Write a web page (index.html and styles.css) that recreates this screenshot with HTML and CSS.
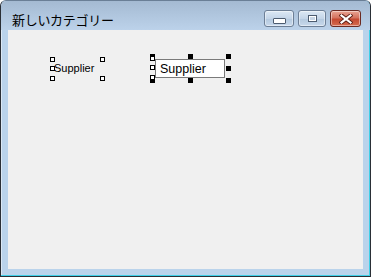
FILE: index.html
```html
<!DOCTYPE html>
<html lang="ja">
<head>
  <meta charset="UTF-8">
  <title>新しいカテゴリー</title>
  <link rel="stylesheet" href="styles.css">
</head>
<body>
  <div class="window">
    <!-- Title bar -->
    <div class="titlebar">
      <span class="title">新しいカテゴリー</span>
      <div class="controls">
        <div class="ctl min"><span class="glyph-min"></span></div>
        <div class="ctl max"><span class="glyph-max"></span></div>
        <div class="ctl close">
          <svg width="14" height="10" viewBox="0 0 14 10">
            <path d="M2.5 1.5 L11.5 8.5 M11.5 1.5 L2.5 8.5" stroke="#5a1d14" stroke-width="4" stroke-linecap="square"/>
            <path d="M2.5 1.5 L11.5 8.5 M11.5 1.5 L2.5 8.5" stroke="#fff" stroke-width="2.2" stroke-linecap="square"/>
          </svg>
        </div>
      </div>
    </div>

    <!-- Designer surface -->
    <div class="client">
      <div class="label-ctl">Supplier</div>
      <span class="grip hollow" style="left:42px;top:27px"></span>
      <span class="grip hollow" style="left:92px;top:27px"></span>
      <span class="grip hollow" style="left:42px;top:36px"></span>
      <span class="grip hollow" style="left:42px;top:46px"></span>
      <span class="grip hollow" style="left:92px;top:46px"></span>

      <div class="textbox">Supplier</div>
      <span class="grip solid" style="left:142px;top:24px"></span>
      <span class="grip solid" style="left:180px;top:24px"></span>
      <span class="grip solid" style="left:218px;top:24px"></span>
      <span class="grip solid" style="left:218px;top:36px"></span>
      <span class="grip solid" style="left:142px;top:48px"></span>
      <span class="grip solid" style="left:180px;top:48px"></span>
      <span class="grip solid" style="left:218px;top:48px"></span>
      <span class="grip hollow" style="left:142px;top:26px"></span>
      <span class="grip hollow" style="left:142px;top:35px"></span>
      <span class="grip hollow" style="left:142px;top:45px"></span>
    </div>
  </div>
</body>
</html>
```

FILE: styles.css
```css
body {
  margin: 0;
  background: #ffffff;
  font-family: "Noto Sans CJK JP", "DejaVu Sans", sans-serif;
}

.window {
  width: 369px;
  height: 275px;
  border: 1px solid #2a2f36;
  border-top-color: #6a7f96;
  border-radius: 6px 6px 0 0;
  background: #bad3eb;
  box-shadow: inset 0 -1px 0 #3fd0e8, inset 1px 0 0 #dbe8f5, inset -1px 0 0 #3fd0e8;
  display: flex;
  flex-direction: column;
  overflow: hidden;
}

/* Title bar */
.titlebar {
  height: 29px;
  background: linear-gradient(#a4bad2, #bcd2ea);
  display: flex;
  align-items: center;
  justify-content: space-between;
  padding: 0 9px 0 11px;
}

.title {
  font-size: 13px;
  color: #000;
  margin-top: 7px;
  letter-spacing: -0.3px;
}

.controls {
  display: flex;
  gap: 4px;
  margin-top: 6px;
}

.ctl {
  height: 15px;
  border: 1px solid #6d7f96;
  border-radius: 3px;
  display: flex;
  align-items: center;
  justify-content: center;
  background: linear-gradient(#dce8f4 0%, #c4d5e8 50%, #b3c8de 51%, #c8d9ec 100%);
  box-shadow: inset 0 0 0 1px rgba(255,255,255,0.45);
}

.min { width: 28px; }
.max { width: 26px; }

.close {
  width: 29px;
  border-color: #6b2a22;
  background: linear-gradient(#e9a493 0%, #d4735f 45%, #c44a32 55%, #d66c4f 100%);
}

.glyph-min {
  width: 11px;
  height: 4px;
  margin-top: 4px;
  background: #fff;
  border: 1px solid #4d5c70;
  border-radius: 1px;
}

.glyph-max {
  width: 7px;
  height: 5px;
  border: 1px solid #4d5c70;
  box-shadow: inset 0 0 0 1px #fff;
  background: #c8d6e6;
}

/* Client area */
.client {
  position: relative;
  flex: 1;
  margin: 0 7px 7px 7px;
  background: #f0f0f0;
}

.label-ctl {
  position: absolute;
  left: 46px;
  top: 32px;
  font-family: "Liberation Sans", sans-serif;
  font-size: 11px;
  line-height: 13px;
  color: #000;
}

.textbox {
  position: absolute;
  left: 147px;
  top: 29px;
  width: 64px;
  height: 17px;
  border: 1px solid #7a7a7a;
  background: #fff;
  font-family: "Liberation Sans", sans-serif;
  font-size: 12.5px;
  line-height: 18px;
  padding-left: 4px;
}

.grip {
  position: absolute;
  box-sizing: border-box;
}

.grip.hollow {
  width: 5px;
  height: 5px;
  border: 1px solid #000;
  background: #fff;
}

.grip.solid {
  width: 5px;
  height: 5px;
  background: #000;
}
```
